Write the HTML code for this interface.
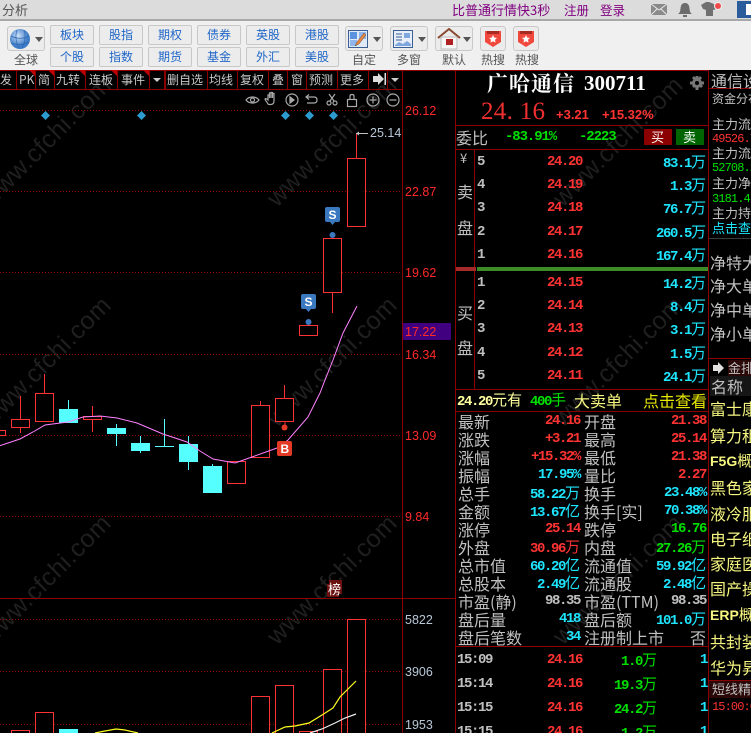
<!DOCTYPE html>
<html><head><meta charset="utf-8"><style>
html,body{margin:0;padding:0;background:#000}
#p{position:relative;width:751px;height:733px;overflow:hidden;background:#000;font-family:"Liberation Sans","WenQuanYi Zen Hei",sans-serif}
.t{position:absolute;white-space:nowrap;height:18px;line-height:18px;font-size:15px;color:#c0c0c0;font-family:"WenQuanYi Zen Hei","Noto Sans CJK SC",sans-serif}
.n{position:absolute;white-space:nowrap;height:18px;font:bold 14px/18px "Liberation Mono",monospace;letter-spacing:-1.4px}
.n i{font:normal 15px/18px "WenQuanYi Zen Hei","Noto Sans CJK SC",sans-serif;letter-spacing:0}
.r{color:#ff3333}.c{color:#1ee6ff}.g{color:#00e000}.w{color:#c0c0c0}.y{color:#f5f580}
.b{position:absolute;box-sizing:border-box;width:44px;height:20px;border:1px solid #c8c8c8;border-radius:2px;background:#ececec;color:#1f66c8;font:12px/18px "WenQuanYi Zen Hei","Noto Sans CJK SC",sans-serif;text-align:center}
.ib{position:absolute;box-sizing:border-box;top:26px;height:25px;width:38px;border:1px solid #c8c8c8;border-radius:3px;background:#ececec}
.ib:after{content:"";position:absolute;left:27px;top:10px;border:4px solid transparent;border-top:5px solid #555}
.ib2{position:absolute;box-sizing:border-box;top:26px;height:25px;width:26px;border:1px solid #c8c8c8;border-radius:3px;background:#ececec}
.l{position:absolute;top:52px;height:16px;font:12px/16px "WenQuanYi Zen Hei","Noto Sans CJK SC",sans-serif;color:#555;white-space:nowrap}
.tab{position:absolute;top:71px;height:18px;font:12px/18px "WenQuanYi Zen Hei","Noto Sans CJK SC",sans-serif;color:#c8c8c8;white-space:nowrap}
.ax{position:absolute;font:12.5px/14px "Liberation Sans",sans-serif;color:#ff2a2a;white-space:nowrap}
.wm{position:absolute;font:25px/30px "Liberation Sans",sans-serif;color:#1f1f1f;letter-spacing:.5px;transform:rotate(-45deg);transform-origin:0 100%;white-space:nowrap}
.z{position:absolute}
</style></head><body><div id="p">

<!-- top bars -->
<div class="z" style="left:0;top:0;width:751px;height:19px;background:#dcdcdc"></div>
<div class="z" style="left:0;top:19px;width:751px;height:2px;background:#a8a8a8"></div>
<div class="z" style="left:0;top:21px;width:751px;height:49px;background:#f0f0f0"></div>
<span class="l" style="left:2px;top:2px;color:#555;font-size:13px">分析</span>
<span class="l" style="left:452px;top:2px;color:#800080;font-size:13px">比普通行情快3秒</span>
<span class="l" style="left:564px;top:2px;color:#800080;font-size:12.5px">注册</span>
<span class="l" style="left:600px;top:2px;color:#800080;font-size:12.5px">登录</span>
<svg class="z" style="left:640px;top:0" width="111" height="20">
<rect x="11" y="4" width="16" height="11" fill="#8a8a8a"/><path d="M11 4l8 6 8-6M11 15l6-6M27 15l-6-6" stroke="#e8e8e8" fill="none"/>
<path d="M38 14c3-2 2-5 3-8 1-4 7-4 8 0 1 3 0 6 3 8z" fill="#6c6c6c"/><rect x="43" y="15" width="4" height="2" fill="#6c6c6c"/>
<path d="M61 5l5-3h3l5 2 3 5-4 1v6H66v-6l-3-1z" fill="#707070"/><circle cx="78" cy="6" r="3.500" fill="#f04a4a" stroke="#eee"/>
<rect x="97" y="1" width="14" height="17" fill="#2a5c9c"/><rect x="106" y="4" width="5" height="11" fill="#fff"/>
</svg>

<!-- toolbar -->
<div class="ib" style="left:7px"></div>
<svg class="z" style="left:9px;top:28px" width="22" height="22"><defs><radialGradient id="gl" cx=".4" cy=".35"><stop offset="0" stop-color="#cfe2f8"/><stop offset="1" stop-color="#3d7cc8"/></radialGradient></defs><circle cx="11" cy="11" r="10" fill="url(#gl)"/><path d="M2 8c6 3 12 3 18 0M2 15c6 2 12 2 18-1M8 2c-2 6-1 13 2 18M15 2c2 6 1 13-2 18" stroke="#2f68b0" fill="none" stroke-width=".7"/></svg>
<span class="l" style="left:14px">全球</span>
<div class="b" style="left:50px;top:25px">板块</div><div class="b" style="left:99px;top:25px">股指</div><div class="b" style="left:148px;top:25px">期权</div><div class="b" style="left:197px;top:25px">债券</div><div class="b" style="left:246px;top:25px">英股</div><div class="b" style="left:295px;top:25px">港股</div>
<div class="b" style="left:50px;top:47px">个股</div><div class="b" style="left:99px;top:47px">指数</div><div class="b" style="left:148px;top:47px">期货</div><div class="b" style="left:197px;top:47px">基金</div><div class="b" style="left:246px;top:47px">外汇</div><div class="b" style="left:295px;top:47px">美股</div>
<div class="ib" style="left:345px"></div>
<svg class="z" style="left:348px;top:30px" width="20" height="18"><rect x=".5" y=".5" width="19" height="17" fill="#dfe9f7" stroke="#3a5f95"/><rect x="2" y="2" width="7" height="7" fill="#5b93de"/><rect x="11" y="2" width="7" height="7" fill="#8fb6ea"/><rect x="2" y="10" width="7" height="6" fill="#8fb6ea"/><path d="M7 16l2-4 7-9 2 2-7 9z" fill="#e9843a" stroke="#555" stroke-width=".5"/></svg>
<span class="l" style="left:352px">自定</span>
<div class="ib" style="left:390px"></div>
<svg class="z" style="left:393px;top:30px" width="20" height="18"><rect x=".5" y=".5" width="19" height="17" fill="#e8eef8" stroke="#3a5f95"/><path d="M3 4h6M3 7h6M3 10h6" stroke="#3a5f95"/><rect x="11" y="3" width="6" height="5" fill="#7fa6de"/><path d="M2 15l4-3 4 2 4-3 4 3v2H2z" fill="#7fa6de"/></svg>
<span class="l" style="left:397px">多窗</span>
<div class="ib" style="left:435px"></div>
<svg class="z" style="left:437px;top:28px" width="24" height="22"><path d="M1 10L12 1l11 9" fill="none" stroke="#8a4a30" stroke-width="2"/><rect x="4" y="9" width="16" height="12" fill="#f6f6f6" stroke="#bbb"/><rect x="9" y="11" width="7" height="6" fill="#b02020"/></svg>
<span class="l" style="left:442px">默认</span>
<div class="ib2" style="left:480px"></div><div class="ib2" style="left:513px"></div>
<svg class="z" style="left:484px;top:30px" width="18" height="18"><path d="M1 1h16v11l-8 5-8-5z" fill="#f0483c"/><path d="M3 1h12v3H3z" fill="#a82a22"/><path d="M9 5l1.2 2.6 2.8.3-2 1.9.5 2.8L9 11.2l-2.5 1.4.5-2.8-2-1.9 2.8-.3z" fill="#fff"/></svg>
<svg class="z" style="left:517px;top:30px" width="18" height="18"><path d="M1 1h16v11l-8 5-8-5z" fill="#f0483c"/><path d="M3 1h12v3H3z" fill="#a82a22"/><path d="M9 5l1.2 2.6 2.8.3-2 1.9.5 2.8L9 11.2l-2.5 1.4.5-2.8-2-1.9 2.8-.3z" fill="#fff"/></svg>
<span class="l" style="left:481px">热搜</span><span class="l" style="left:515px">热搜</span>

<!-- watermarks -->
<span class="wm" style="left:-4px;top:183px">www.cfchi.com</span><span class="wm" style="left:282px;top:183px">www.cfchi.com</span><span class="wm" style="left:568px;top:183px">www.cfchi.com</span>
<span class="wm" style="left:-4px;top:403px">www.cfchi.com</span><span class="wm" style="left:282px;top:403px">www.cfchi.com</span><span class="wm" style="left:568px;top:403px">www.cfchi.com</span>
<span class="wm" style="left:-4px;top:621px">www.cfchi.com</span><span class="wm" style="left:282px;top:621px">www.cfchi.com</span><span class="wm" style="left:568px;top:621px">www.cfchi.com</span>

<!-- chart -->
<svg class="z" style="left:0;top:0" width="751" height="733">
<g stroke="#a00000" stroke-dasharray="1 2" shape-rendering="crispEdges">
<path d="M0 110.5H402M0 191.5H402M0 272.5H402M0 354.5H402M0 435.5H402M0 516.5H402M0 619.5H402M0 671.5H402M0 724.5H402"/>
</g>
<g stroke="#8b0000" shape-rendering="crispEdges" fill="none">
<path d="M402.5 90V733M0 598.5H455M455.5 70V733M474.5 149V389M708.5 70V733M0 70.5H708M0 89.5H402"/>
<path d="M16.5 70v20M35.5 70v20M54.5 70v20M85.5 70v20M117.5 70v20M149.5 70v20M164.5 70v20M165.5 70v20M207.5 70v20M237.5 70v20M268.5 70v20M287.5 70v20M306.5 70v20M337.5 70v20M368.5 70v20M387.5 70v20M402.5 70v20"/>
<path d="M455 125.5H708M455 149.5H708M455 389.5H708M455 411.5H708M455 646.5H708M709 88.5H751M709 358.5H751M709 680.5H751"/>
</g>
<path d="M709 238.5H751" stroke="#3a3a3a" shape-rendering="crispEdges"/>
<g fill="#c00000"><path d="M29 70h6l0 6zM48 70h6v6zM79 70h6v6zM111 70h6v6zM143 70h6v6z"/></g>
<path d="M153 78h8l-4 4z" fill="#ccc"/><path d="M391 78h8l-4 4z" fill="#ccc"/>
<path d="M373 76h5v-3l6 6-6 6v-3h-5z" fill="#ddd"/><rect x="384.5" y="73" width="1.5" height="12" fill="#ddd"/>
<g fill="none" stroke="#aaa" stroke-width="1.2">
<path d="M246 100c3-4 10-4 13 0-3 4-10 4-13 0z"/><circle cx="252.500" cy="100" r="2"/>
<path d="M268 104c-1-2-3-4-3-5 1-1 2 0 3 1v-5h1.500v3-5h1.500v5-5.500h1.500v5.500-4.500h1.500v7c0 3-1 4-3 4h-2z"/>
<circle cx="292" cy="100" r="6"/><path d="M290 97l4 3-4 3z" fill="#aaa"/>
<path d="M307 97h7c2 0 3 1 3 3s-1 3-3 3h-7M309 94.500l-3 2.500 3 2.500"/>
<circle cx="329" cy="103" r="2"/><circle cx="335" cy="103" r="2"/><path d="M330 101l5-7M334 101l-5-7"/>
<rect x="347.500" y="99.500" width="9" height="7"/><path d="M350 99v-3c0-2 4-2 4 0v3"/>
<circle cx="373" cy="100" r="6"/><path d="M369.500 100h7M373 96.500v7"/>
<circle cx="393" cy="100" r="6"/><path d="M389.500 100h7"/>
</g>
<g fill="#2c9bd0"><path d="M45.500 111l4.500 4.500-4.500 4.500-4.500-4.500zM141.500 111l4.500 4.500-4.500 4.500-4.500-4.500zM285.500 111l4.500 4.500-4.500 4.500-4.500-4.500zM309.500 111l4.500 4.500-4.500 4.500-4.500-4.500zM333.500 111l4.500 4.500-4.500 4.500-4.500-4.500z"/></g>

<!-- red candles -->
<g stroke="#ff3333" fill="#000" shape-rendering="crispEdges">
<path d="M20.500 396V433M44.500 374V394M92.500 406V432M260.500 401V405M284.500 385V398M332.500 292V313M356.500 133V158M285 421V426" fill="none"/>
<rect x="-5.500" y="430.500" width="11" height="5"/>
<rect x="11.500" y="419.500" width="18" height="8"/>
<rect x="35.500" y="393.500" width="18" height="28"/>
<rect x="83.500" y="416.500" width="18" height="3"/>
<rect x="227.500" y="461.500" width="18" height="22"/>
<rect x="251.500" y="405.500" width="18" height="52"/>
<rect x="275.500" y="398.500" width="18" height="23"/>
<rect x="299.500" y="325.500" width="18" height="10"/>
<rect x="323.500" y="238.500" width="18" height="54"/>
<rect x="347.500" y="158.500" width="18" height="68"/>
<!-- volume -->
<rect x="11.500" y="730.500" width="18" height="10"/>
<rect x="35.500" y="712.500" width="18" height="30"/>
<rect x="251.500" y="696.500" width="18" height="50"/>
<rect x="275.500" y="685.500" width="18" height="60"/>
<rect x="299.500" y="731.500" width="18" height="10"/>
<rect x="323.500" y="669.500" width="18" height="80"/>
<rect x="347.500" y="619.500" width="18" height="130"/>
</g>
<!-- cyan candles -->
<g fill="#55ffff" shape-rendering="crispEdges">
<rect x="59" y="409" width="19" height="14"/><rect x="68" y="400" width="1" height="9"/>
<rect x="107" y="428" width="19" height="6"/><rect x="116" y="424" width="1" height="22"/>
<rect x="131" y="443" width="19" height="8"/><rect x="140" y="436" width="1" height="17"/>
<rect x="155" y="446" width="19" height="1"/><rect x="164" y="419" width="1" height="28"/>
<rect x="179" y="444" width="19" height="18"/><rect x="188" y="436" width="1" height="34"/>
<rect x="203" y="466" width="19" height="27"/><rect x="212" y="464" width="1" height="2"/>
<rect x="59" y="729" width="19" height="4"/>
</g>
<!-- MA -->
<polyline fill="none" stroke="#ff80ff" stroke-width="1" points="0,445.700 20,439 33,432 45,425 68,422 83,417 100,416 117,418 137,423 163,434 187,442 200,451 213,459 235,463 252,457 277,448 288,440 308,417 320,393 325,380 333,360 343,333 357,306"/>
<polyline fill="none" stroke="#ffff20" stroke-width="1.200" points="95,733 105,731 116,729 125,730 138,733"/>
<polyline fill="none" stroke="#ffff20" stroke-width="1.200" points="272,733 285,727 295,726 309,723 322,715 333,708 340,697 356,681"/>
<polyline fill="none" stroke="#f0f0f0" stroke-width="1.200" points="310,733 322,729 335,723 345,718 356,714"/>
<!-- markers -->
<path d="M356 133.500h12" stroke="#c0c0c0"/><path d="M356 133.500l3-2v4z" fill="#c0c0c0"/>
<rect x="301" y="294" width="15" height="15" rx="2" fill="#3a78c0"/><path d="M306 309h5l-2.500 3z" fill="#3a78c0"/><circle cx="308.500" cy="322" r="3" fill="#3a78c0"/>
<rect x="325" y="207" width="15" height="15" rx="2" fill="#3a78c0"/><path d="M330 222h5l-2.500 3z" fill="#3a78c0"/><circle cx="332.500" cy="235" r="3" fill="#3a78c0"/>
<rect x="277" y="441" width="15" height="15" rx="2" fill="#e23a24"/><circle cx="284.500" cy="427.500" r="3" fill="#e23a24"/>
<text x="304.500" y="306" fill="#fff" font-family="Liberation Sans" font-size="12" font-weight="bold">S</text>
<text x="328.500" y="219" fill="#fff" font-family="Liberation Sans" font-size="12" font-weight="bold">S</text>
<text x="280.500" y="453" fill="#fff" font-family="Liberation Sans" font-size="12" font-weight="bold">B</text>
<rect x="329" y="580" width="13" height="14" fill="#6b0f0f"/><rect x="327" y="584" width="12" height="13" fill="#6b0f0f"/>
<rect x="403" y="323" width="48" height="17" fill="#40007f"/>
<!-- book divider -->
<rect x="456" y="267" width="20" height="4" fill="#a52a2a"/><rect x="477" y="267" width="231" height="4" fill="#3c8c28"/>
<!-- buy sell boxes -->
<rect x="644" y="129" width="28" height="16" fill="#8b0000"/><rect x="676" y="129" width="28" height="16" fill="#006400"/>
<!-- side bg -->
<rect x="728" y="360" width="23" height="16" fill="#2a0808"/><rect x="710" y="376" width="41" height="20" fill="#161616"/>
<rect x="709" y="681" width="42" height="17" fill="#2a0808"/>
<path d="M713 366h5v-3l6 6-6 6v-3h-5z" fill="#e0e0e0" transform="translate(0,-1)"/>
<!-- gear -->
<g fill="#777"><circle cx="697" cy="83" r="5"/><path d="M695.500 76h3v14h-3zM690 81.500h14v3h-14zM692 78l2-2 9 10-2 2zM702 78l-8 10-2-2 8-10z"/></g><circle cx="697" cy="83" r="2" fill="#000"/>
</svg>
<span class="z" style="left:328px;top:583px;font:13px/14px 'WenQuanYi Zen Hei',sans-serif;color:#fff">榜</span>

<!-- tabs -->
<span class="tab" style="left:0">发</span><span class="tab" style="left:19px">PK</span><span class="tab" style="left:38px">简</span><span class="tab" style="left:56px">九转</span><span class="tab" style="left:89px">连板</span><span class="tab" style="left:121px">事件</span><span class="tab" style="left:167px">删自选</span><span class="tab" style="left:209px">均线</span><span class="tab" style="left:240px">复权</span><span class="tab" style="left:272px">叠</span><span class="tab" style="left:291px">窗</span><span class="tab" style="left:309px">预测</span><span class="tab" style="left:340px">更多</span>

<!-- axis -->
<span class="ax" style="left:405px;top:104px">26.12</span><span class="ax" style="left:405px;top:185px">22.87</span><span class="ax" style="left:405px;top:266px">19.62</span><span class="ax" style="left:405px;top:325px">17.22</span><span class="ax" style="left:405px;top:348px">16.34</span><span class="ax" style="left:405px;top:429px">13.09</span><span class="ax" style="left:405px;top:510px">9.84</span>
<span class="ax" style="left:405px;top:613px;color:#b8c8d8">5822</span><span class="ax" style="left:405px;top:665px;color:#b8c8d8">3906</span><span class="ax" style="left:405px;top:718px;color:#b8c8d8">1953</span>
<span class="ax" style="left:370px;top:126px;color:#b8c8d8">25.14</span>

<!-- header -->
<span class="z" style="left:487px;top:71px;font:bold 21px/24px 'Noto Serif CJK SC',serif;color:#fff;letter-spacing:1px;white-space:nowrap">广哈通信</span>
<span class="z" style="left:584px;top:71px;font:bold 21px/24px 'Liberation Serif',serif;color:#fff;white-space:nowrap">300711</span>
<span class="z" style="left:481px;top:99px;font:25px/26px 'Liberation Serif',serif;color:#f03030;white-space:nowrap;letter-spacing:.3px">24. 16</span>
<span class="z" style="left:556px;top:107px;font:bold 13px/16px 'Liberation Sans',sans-serif;color:#ff3333;white-space:nowrap">+3.21</span>
<span class="z" style="left:602px;top:107px;font:bold 13px/16px 'Liberation Sans',sans-serif;color:#ff3333;white-space:nowrap">+15.32%</span>

<span class="t" style="left:456px;top:128px;font-size:16px">委比</span>
<span class="n g" style="left:505px;top:128px;letter-spacing:-1.1px">-83.91%</span><span class="n g" style="left:579px;top:128px;letter-spacing:-1.1px">-2223</span>
<span class="t" style="left:651px;top:128px;font-size:13px;color:#fff">买</span><span class="t" style="left:683px;top:128px;font-size:13px;color:#fff">卖</span>

<!-- order book -->
<span class="t" style="left:460px;top:149px;font-size:13px">¥</span>
<span class="t" style="left:457px;top:182px;font-size:16px">卖</span><span class="t" style="left:457px;top:218px;font-size:16px">盘</span>
<span class="t" style="left:457px;top:303px;font-size:16px">买</span><span class="t" style="left:457px;top:338px;font-size:16px">盘</span>

<span class="n w" style="left:477px;top:153px">5</span><span class="n r" style="left:547px;top:153px">24.20</span><span class="n c" style="right:45px;top:153px">83.1<i>万</i></span>
<span class="n w" style="left:477px;top:176px">4</span><span class="n r" style="left:547px;top:176px">24.19</span><span class="n c" style="right:45px;top:176px">1.3<i>万</i></span>
<span class="n w" style="left:477px;top:199px">3</span><span class="n r" style="left:547px;top:199px">24.18</span><span class="n c" style="right:45px;top:199px">76.7<i>万</i></span>
<span class="n w" style="left:477px;top:223px">2</span><span class="n r" style="left:547px;top:223px">24.17</span><span class="n c" style="right:45px;top:223px">260.5<i>万</i></span>
<span class="n w" style="left:477px;top:246px">1</span><span class="n r" style="left:547px;top:246px">24.16</span><span class="n c" style="right:45px;top:246px">167.4<i>万</i></span>
<span class="n w" style="left:477px;top:274px">1</span><span class="n r" style="left:547px;top:274px">24.15</span><span class="n c" style="right:45px;top:274px">14.2<i>万</i></span>
<span class="n w" style="left:477px;top:297px">2</span><span class="n r" style="left:547px;top:297px">24.14</span><span class="n c" style="right:45px;top:297px">8.4<i>万</i></span>
<span class="n w" style="left:477px;top:320px">3</span><span class="n r" style="left:547px;top:320px">24.13</span><span class="n c" style="right:45px;top:320px">3.1<i>万</i></span>
<span class="n w" style="left:477px;top:344px">4</span><span class="n r" style="left:547px;top:344px">24.12</span><span class="n c" style="right:45px;top:344px">1.5<i>万</i></span>
<span class="n w" style="left:477px;top:367px">5</span><span class="n r" style="left:547px;top:367px">24.11</span><span class="n c" style="right:45px;top:367px">24.1<i>万</i></span>

<!-- big order -->
<span class="n" style="left:457px;top:391px;color:#ffffa0">24.20<i style="color:#ffffa0">元有</i></span>
<span class="n g" style="left:530px;top:391px">400<i>手</i></span>
<span class="t y" style="left:574px;top:391px;font-size:16px;color:#f5f580">大卖单</span>
<span class="t" style="left:643px;top:391px;font-size:16px;color:#e8e800">点击查看</span>

<!-- stats -->
<span class="t" style="left:458px;top:412px;font-size:16px">最新</span><span class="n r" style="right:171px;top:412px">24.16</span><span class="t" style="left:584px;top:412px;font-size:16px">开盘</span><span class="n r" style="right:45px;top:412px">21.38</span>
<span class="t" style="left:458px;top:430px;font-size:16px">涨跌</span><span class="n r" style="right:171px;top:430px">+3.21</span><span class="t" style="left:584px;top:430px;font-size:16px">最高</span><span class="n r" style="right:45px;top:430px">25.14</span>
<span class="t" style="left:458px;top:448px;font-size:16px">涨幅</span><span class="n r" style="right:171px;top:448px">+15.32%</span><span class="t" style="left:584px;top:448px;font-size:16px">最低</span><span class="n r" style="right:45px;top:448px">21.38</span>
<span class="t" style="left:458px;top:466px;font-size:16px">振幅</span><span class="n c" style="right:171px;top:466px">17.95%</span><span class="t" style="left:584px;top:466px;font-size:16px">量比</span><span class="n r" style="right:45px;top:466px">2.27</span>
<span class="t" style="left:458px;top:484px;font-size:16px">总手</span><span class="n c" style="right:171px;top:484px">58.22<i>万</i></span><span class="t" style="left:584px;top:484px;font-size:16px">换手</span><span class="n c" style="right:45px;top:484px">23.48%</span>
<span class="t" style="left:458px;top:502px;font-size:16px">金额</span><span class="n c" style="right:171px;top:502px">13.67<i>亿</i></span><span class="t" style="left:584px;top:502px;font-size:16px">换手[实]</span><span class="n c" style="right:45px;top:502px">70.38%</span>
<span class="t" style="left:458px;top:520px;font-size:16px">涨停</span><span class="n r" style="right:171px;top:520px">25.14</span><span class="t" style="left:584px;top:520px;font-size:16px">跌停</span><span class="n g" style="right:45px;top:520px">16.76</span>
<span class="t" style="left:458px;top:538px;font-size:16px">外盘</span><span class="n r" style="right:171px;top:538px">30.96<i>万</i></span><span class="t" style="left:584px;top:538px;font-size:16px">内盘</span><span class="n g" style="right:45px;top:538px">27.26<i>万</i></span>
<span class="t" style="left:458px;top:556px;font-size:16px">总市值</span><span class="n c" style="right:171px;top:556px">60.20<i>亿</i></span><span class="t" style="left:584px;top:556px;font-size:16px">流通值</span><span class="n c" style="right:45px;top:556px">59.92<i>亿</i></span>
<span class="t" style="left:458px;top:574px;font-size:16px">总股本</span><span class="n c" style="right:171px;top:574px">2.49<i>亿</i></span><span class="t" style="left:584px;top:574px;font-size:16px">流通股</span><span class="n c" style="right:45px;top:574px">2.48<i>亿</i></span>
<span class="t" style="left:458px;top:592px;font-size:16px">市盈(静)</span><span class="n w" style="right:171px;top:592px">98.35</span><span class="t" style="left:584px;top:592px;font-size:16px">市盈(TTM)</span><span class="n w" style="right:45px;top:592px">98.35</span>
<span class="t" style="left:458px;top:610px;font-size:16px">盘后量</span><span class="n c" style="right:171px;top:610px">418</span><span class="t" style="left:584px;top:610px;font-size:16px">盘后额</span><span class="n c" style="right:45px;top:610px">101.0<i>万</i></span>
<span class="t" style="left:458px;top:628px;font-size:16px">盘后笔数</span><span class="n c" style="right:171px;top:628px">34</span><span class="t" style="left:584px;top:628px;font-size:16px">注册制上市</span><span class="t" style="right:45px;top:628px;font-size:16px">否</span>

<!-- trades -->
<span class="n w" style="left:457px;top:651px">15:09</span><span class="n r" style="left:547px;top:651px">24.16</span><span class="n g" style="right:94px;top:651px">1.0<i>万</i></span><span class="n c" style="left:700px;top:651px">1</span>
<span class="n w" style="left:457px;top:675px">15:14</span><span class="n r" style="left:547px;top:675px">24.16</span><span class="n g" style="right:94px;top:675px">19.3<i>万</i></span><span class="n c" style="left:700px;top:675px">1</span>
<span class="n w" style="left:457px;top:699px">15:15</span><span class="n r" style="left:547px;top:699px">24.16</span><span class="n g" style="right:94px;top:699px">24.2<i>万</i></span><span class="n c" style="left:700px;top:699px">1</span>
<span class="n w" style="left:457px;top:723px">15:15</span><span class="n r" style="left:547px;top:723px">24.16</span><span class="n g" style="right:94px;top:723px">1.2<i>万</i></span><span class="n c" style="left:700px;top:723px">1</span>

<!-- right column -->
<span class="t" style="left:711px;top:71px;font-size:16px">通信设备</span>
<span class="t" style="left:712px;top:90px;font-size:12px">资金分布</span>
<span class="t" style="left:712px;top:115px;font-size:13px">主力流入</span>
<span class="n" style="left:712px;top:130px;font:normal 12px/18px 'Liberation Mono',monospace;color:#ff3333;letter-spacing:-.9px">49526.7</span>
<span class="t" style="left:712px;top:144px;font-size:13px">主力流出</span>
<span class="n" style="left:712px;top:159px;font:normal 12px/18px 'Liberation Mono',monospace;color:#00e000;letter-spacing:-.9px">52708.1</span>
<span class="t" style="left:712px;top:174px;font-size:13px">主力净流</span>
<span class="n" style="left:712px;top:190px;font:normal 12px/18px 'Liberation Mono',monospace;color:#00e000;letter-spacing:-.9px">3181.4</span>
<span class="t" style="left:712px;top:204px;font-size:13px">主力持仓</span>
<span class="t" style="left:712px;top:219px;font-size:13px;color:#1ee6ff">点击查看</span>
<span class="t" style="left:710px;top:253px;font-size:16px">净特大单</span>
<span class="t" style="left:710px;top:276px;font-size:16px">净大单</span>
<span class="t" style="left:710px;top:300px;font-size:16px">净中单</span>
<span class="t" style="left:710px;top:324px;font-size:16px">净小单</span>
<span class="t" style="left:728px;top:359px;font-size:13px">金排</span>
<span class="t" style="left:711px;top:377px;font-size:16px">名称</span>

<span class="t y" style="left:710px;top:399px;font-size:16px">富士康</span>
<span class="t y" style="left:710px;top:426px;font-size:16px">算力租</span>
<span class="n y" style="left:710px;top:452px;font-family:'Liberation Sans',sans-serif;letter-spacing:0">F5G<i style="font-size:15px">概</i></span>
<span class="t y" style="left:710px;top:478px;font-size:16px">黑色家</span>
<span class="t y" style="left:710px;top:504px;font-size:16px">液冷服</span>
<span class="t y" style="left:710px;top:529px;font-size:16px">电子纸</span>
<span class="t y" style="left:710px;top:554px;font-size:16px">家庭医</span>
<span class="t y" style="left:710px;top:579px;font-size:16px">国产操</span>
<span class="n y" style="left:710px;top:606px;font-family:'Liberation Sans',sans-serif;letter-spacing:0">ERP<i style="font-size:15px">概</i></span>
<span class="t y" style="left:710px;top:632px;font-size:16px">共封装</span>
<span class="t y" style="left:710px;top:658px;font-size:16px">华为昇</span>
<span class="t" style="left:712px;top:680px;font-size:13px">短线精选</span>
<span class="n" style="left:712px;top:698px;font:normal 12px/18px 'Liberation Mono',monospace;color:#ff3333;letter-spacing:-.9px">15:00:0</span>

</div></body></html>
